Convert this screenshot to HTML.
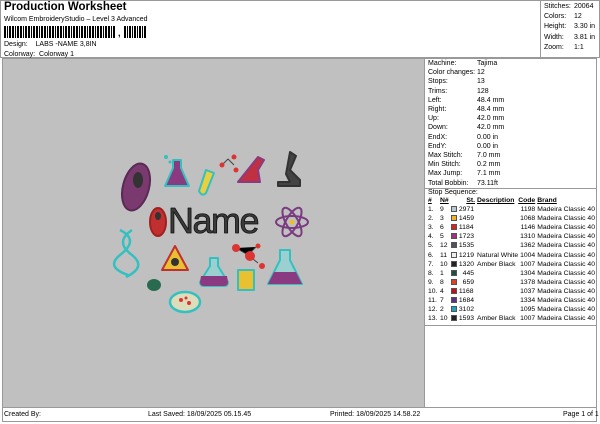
<!DOCTYPE html>
<html><head><style>
*{margin:0;padding:0;box-sizing:border-box}
body{width:600px;height:424px;background:#fff;font-family:"Liberation Sans",Arial,sans-serif;font-size:7px;color:#000;position:relative;overflow:hidden}
.a{position:absolute;white-space:nowrap}
table{border-collapse:collapse}
td{padding:0;height:9.1px;line-height:9.1px;font-size:6.8px;white-space:nowrap}
.sw{display:inline-block;width:6px;height:6px;border:1px solid #555;vertical-align:-1px}
</style></head><body>
<div class="a" style="left:0;top:0;width:600px;height:58px;border:1px solid #999"></div>
<div class="a" style="left:4px;top:1px;font-size:11.5px;font-weight:bold">Production Worksheet</div>
<div class="a" style="left:4px;top:16px">Wilcom EmbroideryStudio – Level 3 Advanced</div>
<div class="a" style="left:4px;top:26px;width:112px;height:12px;background:repeating-linear-gradient(90deg,#000 0 2px,#fff 2px 3px,#000 3px 4px,#fff 4px 5px,#000 5px 7px,#fff 7px 8px)"></div>
<div class="a" style="left:118px;top:28px;font-weight:bold;font-size:9px">,</div>
<div class="a" style="left:124px;top:26px;width:22px;height:12px;background:repeating-linear-gradient(90deg,#000 0 2px,#fff 2px 3px,#000 3px 4px,#fff 4px 5px)"></div>
<div class="a" style="left:4px;top:41px">Design:&nbsp;&nbsp;&nbsp;&nbsp;LABS -NAME 3,8IN</div>
<div class="a" style="left:4px;top:51px">Colorway:&nbsp; Colorway 1</div>
<div class="a" style="left:540px;top:0;width:1px;height:58px;background:#999"></div>
<div class="a" style="left:544px;top:2px;line-height:10.2px">Stitches:<br>Colors:<br>Height:<br>Width:<br>Zoom:</div>
<div class="a" style="left:574px;top:2px;line-height:10.2px">20064<br>12<br>3.30 in<br>3.81 in<br>1:1</div>

<div class="a" style="left:2px;top:58px;width:595px;height:350px;border:1px solid #999"></div>
<div class="a" style="left:3px;top:59px;width:421px;height:348px;background:#c0c0c0"></div>
<div class="a" style="left:424px;top:59px;width:1px;height:348px;background:#999"></div>

<svg class="a" style="left:3px;top:59px" width="421" height="348" viewBox="3 59 421 348">
<g stroke-linejoin="round">
<ellipse cx="136" cy="187" rx="13" ry="24" transform="rotate(15 136 187)" fill="#7a3a70" stroke="#5a2a55" stroke-width="2"/>
<ellipse cx="138" cy="180" rx="5" ry="8" fill="#333"/>
<path d="M173 160h8v8l8 18h-24l8-18z" fill="#8a3a80" stroke="#35c0c0" stroke-width="2"/>
<circle cx="166" cy="157" r="2" fill="#35c0c0"/><circle cx="170" cy="162" r="1.5" fill="#35c0c0"/>
<path d="M206 170l8 3-8 20q-4 4-7-2z" fill="#e8d040" stroke="#35c0c0" stroke-width="2"/>
<path d="M222 165l6-6 6 6" stroke="#444" fill="none"/><circle cx="222" cy="165" r="2.5" fill="#d33"/><circle cx="234" cy="157" r="2.5" fill="#d33"/><circle cx="236" cy="170" r="2.5" fill="#d33"/>
<path d="M258 157l6 3-6 10 2 12h-22z" fill="#c03040" stroke="#8a3a80" stroke-width="2"/>
<path d="M290 152l6 4-6 14 10 10v6h-22v-4h12l-4-8z" fill="#444" stroke="#333" stroke-width="2"/>
<ellipse cx="158" cy="222" rx="8" ry="14" fill="#c03030" stroke="#a02020" stroke-width="2"/>
<ellipse cx="158" cy="216" rx="3" ry="4" fill="#333"/>
<text x="168" y="233" font-family="Liberation Sans,sans-serif" font-size="36" letter-spacing="-1.5" fill="#3a3a3a" stroke="#111" stroke-width="0.8">Name</text>
<g fill="none" stroke="#7a3a80" stroke-width="2"><ellipse cx="292" cy="222" rx="16" ry="6"/><ellipse cx="292" cy="222" rx="16" ry="6" transform="rotate(60 292 222)"/><ellipse cx="292" cy="222" rx="16" ry="6" transform="rotate(-60 292 222)"/></g>
<circle cx="292" cy="222" r="2.5" fill="#e8c030"/>
<path d="M120 230q20 10 0 25q-15 12 8 20M132 230q-18 12 0 25q15 12-6 22" fill="none" stroke="#35c0c0" stroke-width="2.5"/>
<path d="M162 270l13-24 13 24z" fill="#e8c030" stroke="#c03030" stroke-width="2"/>
<circle cx="175" cy="262" r="4" fill="#333"/>
<g stroke="#444"><path d="M236 248l12 7 8 -8M248 255l10 8"/></g>
<circle cx="236" cy="248" r="4" fill="#d33"/><circle cx="250" cy="256" r="5" fill="#d33"/><circle cx="258" cy="246" r="2.5" fill="#d33"/><circle cx="262" cy="266" r="3" fill="#d33"/>
<path d="M210 258h8v8l10 16q0 4-4 4h-20q-4 0-4-4l10-16z" fill="#9ad0d0" stroke="#35c0c0" stroke-width="2"/>
<path d="M201 276h26l1 6q0 4-4 4h-20q-4 0-4-4z" fill="#8a3a80"/>
<path d="M238 270h16v20h-16z" fill="#e8c030" stroke="#35c0c0" stroke-width="2"/>
<path d="M280 250h10v10l12 24h-34l12-24z" fill="#9ad0d0" stroke="#35c0c0" stroke-width="2"/>
<path d="M274 272h22l6 12h-34z" fill="#8a3a80"/>
<ellipse cx="154" cy="285" rx="7" ry="6" fill="#2a6a50"/>
<ellipse cx="185" cy="302" rx="15" ry="10" fill="#ddb" stroke="#35c0c0" stroke-width="2.5"/>
<circle cx="181" cy="300" r="2" fill="#d33"/><circle cx="189" cy="303" r="2" fill="#d33"/><circle cx="186" cy="298" r="1.5" fill="#d33"/>
</g></svg>

<div class="a" style="left:428px;top:59px;line-height:9.2px">Machine:<br>Color changes:<br>Stops:<br>Trims:<br>Left:<br>Right:<br>Up:<br>Down:<br>EndX:<br>EndY:<br>Max Stitch:<br>Min Stitch:<br>Max Jump:<br>Total Bobbin:</div>
<div class="a" style="left:477px;top:59px;line-height:9.2px">Tajima<br>12<br>13<br>128<br>48.4 mm<br>48.4 mm<br>42.0 mm<br>42.0 mm<br>0.00 in<br>0.00 in<br>7.0 mm<br>0.2 mm<br>7.1 mm<br>73.11ft</div>
<div class="a" style="left:425px;top:188px;width:172px;height:1px;background:#999"></div>
<div class="a" style="left:428px;top:189px">Stop Sequence:</div>
<table class="a" style="left:428px;top:196px">
<tr style="font-weight:bold;text-decoration:underline"><td style="width:12px">#</td><td style="width:11px">N#</td><td style="width:24px;text-align:right">St.</td><td style="width:40px;padding-left:2px">Description</td><td style="width:17px;text-align:right">Code</td><td style="padding-left:2px">Brand</td></tr>
<tr><td>1.</td><td>9</td><td><span class="sw" style="background:#b8c8d8"></span> 2971</td><td></td><td align="right">1198</td><td style="padding-left:2px">Madeira Classic 40</td></tr>
<tr><td>2.</td><td>3</td><td><span class="sw" style="background:#f0b030"></span> 1459</td><td></td><td align="right">1068</td><td style="padding-left:2px">Madeira Classic 40</td></tr>
<tr><td>3.</td><td>6</td><td><span class="sw" style="background:#e02020"></span> 1184</td><td></td><td align="right">1146</td><td style="padding-left:2px">Madeira Classic 40</td></tr>
<tr><td>4.</td><td>5</td><td><span class="sw" style="background:#a03080"></span> 1723</td><td></td><td align="right">1310</td><td style="padding-left:2px">Madeira Classic 40</td></tr>
<tr><td>5.</td><td>12</td><td><span class="sw" style="background:#505060"></span> 1535</td><td></td><td align="right">1362</td><td style="padding-left:2px">Madeira Classic 40</td></tr>
<tr><td>6.</td><td>11</td><td><span class="sw" style="background:#eee"></span> 1219</td><td style="padding-left:2px">Natural White</td><td align="right">1004</td><td style="padding-left:2px">Madeira Classic 40</td></tr>
<tr><td>7.</td><td>10</td><td><span class="sw" style="background:#222"></span> 1320</td><td style="padding-left:2px">Amber Black</td><td align="right">1007</td><td style="padding-left:2px">Madeira Classic 40</td></tr>
<tr><td>8.</td><td>1</td><td><span class="sw" style="background:#1a5040"></span> &nbsp;&nbsp;445</td><td></td><td align="right">1304</td><td style="padding-left:2px">Madeira Classic 40</td></tr>
<tr><td>9.</td><td>8</td><td><span class="sw" style="background:#e04020"></span> &nbsp;&nbsp;659</td><td></td><td align="right">1378</td><td style="padding-left:2px">Madeira Classic 40</td></tr>
<tr><td>10.</td><td>4</td><td><span class="sw" style="background:#c01020"></span> 1168</td><td></td><td align="right">1037</td><td style="padding-left:2px">Madeira Classic 40</td></tr>
<tr><td>11.</td><td>7</td><td><span class="sw" style="background:#603080"></span> 1684</td><td></td><td align="right">1334</td><td style="padding-left:2px">Madeira Classic 40</td></tr>
<tr><td>12.</td><td>2</td><td><span class="sw" style="background:#20a0c0"></span> 3102</td><td></td><td align="right">1095</td><td style="padding-left:2px">Madeira Classic 40</td></tr>
<tr><td>13.</td><td>10</td><td><span class="sw" style="background:#222"></span> 1593</td><td style="padding-left:2px">Amber Black</td><td align="right">1007</td><td style="padding-left:2px">Madeira Classic 40</td></tr>
</table>
<div class="a" style="left:425px;top:325px;width:172px;height:1px;background:#999"></div>

<div class="a" style="left:2px;top:408px;width:595px;height:14px;border:1px solid #999;border-top:none"></div>
<div class="a" style="left:4px;top:411px">Created By:</div>
<div class="a" style="left:148px;top:411px">Last Saved: 18/09/2025 05.15.45</div>
<div class="a" style="left:330px;top:411px">Printed: 18/09/2025 14.58.22</div>
<div class="a" style="left:563px;top:411px">Page 1 of 1</div>
</body></html>
